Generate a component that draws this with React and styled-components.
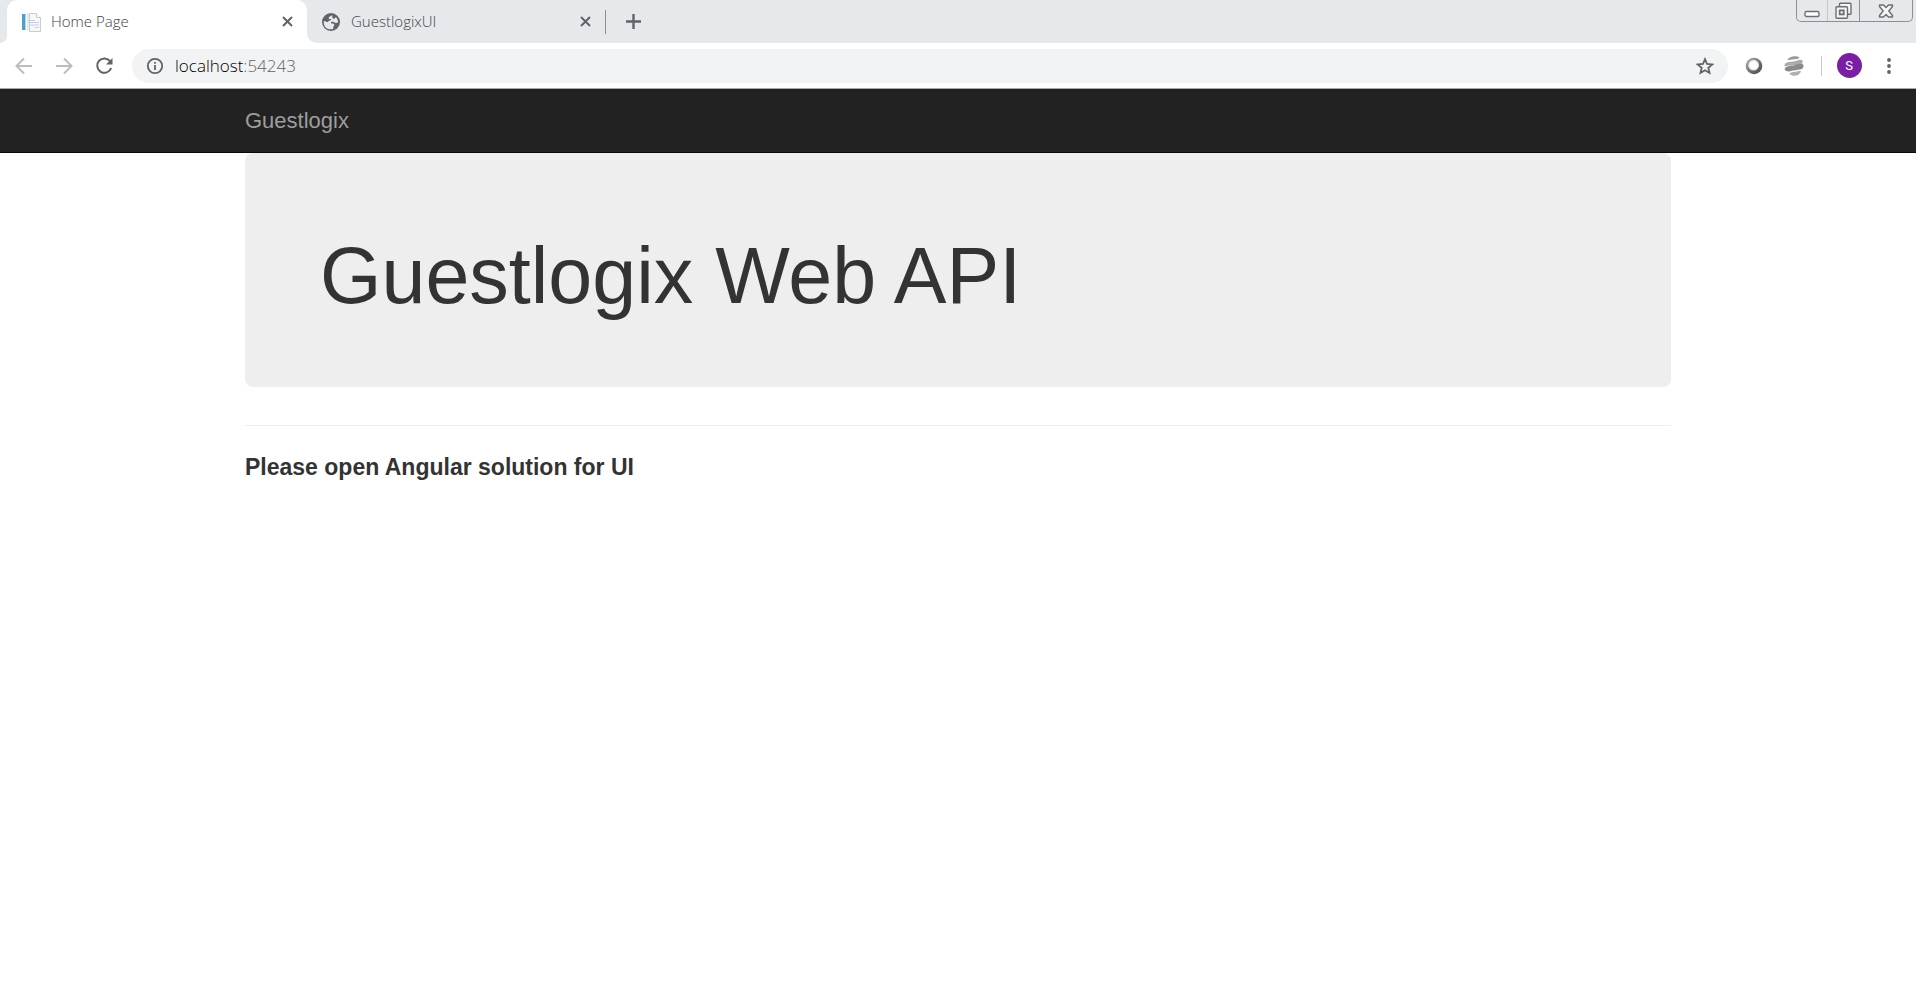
import React from "react";
import styled, { createGlobalStyle } from "styled-components";

const strip = "#e6e9ec";
const ink = "#5f6368";

const GlobalStyle = createGlobalStyle`
  *, *::before, *::after { box-sizing: border-box; }
  body {
    margin: 0;
    background: #fff;
    color: #333;
    font-family: "Liberation Sans", Arial, sans-serif;
  }
  button, input { font: inherit; color: inherit; border: 0; padding: 0; margin: 0; background: none; }
  svg { display: block; }
`;

/* Browser chrome */
const Chrome = styled.header`
  font-family: "Open Sans", "Segoe UI", sans-serif;
  color: ${ink};
  border-bottom: 1px solid #a9a9a9;
`;

const TabStrip = styled.div`
  display: flex;
  height: 43px;
  background: linear-gradient(${strip} 20px, #fff 20px);
`;

const StripEdge = styled.div`
  width: 7px;
  background: ${strip};
  border-bottom-right-radius: 7px;
`;

const StripRest = styled.div`
  flex: 1;
  display: flex;
  justify-content: space-between;
  background: ${strip};
  border-bottom-left-radius: 10px;
`;

const TabGroup = styled.div`
  display: flex;
  align-items: center;
`;

const Tab = styled.div`
  display: flex;
  align-items: center;
  width: ${(p) => (p.$active ? 300 : 298)}px;
  height: 43px;
  padding: 0 10px 0 14px;
  border-radius: 10px 10px 0 0;
  background: ${(p) => (p.$active ? "#fff" : "transparent")};
`;

const TabTitle = styled.button`
  display: flex;
  align-items: center;
  gap: 10px;
  flex: 1;
  height: 40px;
  color: #3f4246;
  font-size: 15px;
  font-weight: 300;
  line-height: 20px;
  text-align: left;
`;

const TabLabel = styled.span`
  padding-bottom: 2px;
`;

const IconButton = styled.button`
  display: flex;
  align-items: center;
  justify-content: center;
  flex: none;
  width: ${(p) => p.$w || 40}px;
  height: ${(p) => p.$h || 34}px;
`;

const Rule = styled.span`
  flex: none;
  width: 1px;
  height: ${(p) => p.$h}px;
  margin: 0 ${(p) => p.$gap || 0}px;
  background: ${(p) => p.$color};
`;

const WindowControls = styled.div`
  display: flex;
  height: 22px;
  margin-right: 3px;
  border: 1px solid #8c9094;
  border-top: 0;
  border-radius: 0 0 5px 5px;
`;

const WindowButton = styled.button`
  display: flex;
  align-items: center;
  justify-content: center;
  width: ${(p) => p.$w}px;
  border-right: ${(p) => (p.$line ? `1px solid ${p.$line}` : "0")};
`;

const Toolbar = styled.div`
  display: flex;
  align-items: center;
  height: 45px;
  padding: 0 7px 0 4px;
`;

const AddressBar = styled.div`
  flex: 1;
  display: flex;
  align-items: center;
  height: 34px;
  margin: 0 6px 0 8px;
  padding: 0 3px;
  border-radius: 17px;
  background: #f1f3f4;
`;

const AddressText = styled.label`
  flex: 1;
  display: flex;
  align-items: center;
  font-size: 17px;
  font-weight: 300;
  line-height: 24px;
`;

const AddressInput = styled.input`
  field-sizing: content;
  height: 24px;
  line-height: 24px;
  color: #000;
  outline: 0;
`;

const Port = styled.span`
  color: #5f6368;
`;

const Avatar = styled.span`
  display: flex;
  align-items: center;
  justify-content: center;
  width: 25px;
  height: 25px;
  border-radius: 50%;
  background: #7b1fa2;
  color: #fff;
  font-family: Roboto, sans-serif;
  font-size: 13px;
  line-height: 16px;
`;

/* Web page */
const NavBar = styled.nav`
  background: #222;
  border-bottom: 1px solid #080808;
`;

const Container = styled.div`
  max-width: 1464px;
  margin: 0 auto;
  padding: 0 19px;
`;

const NavRow = styled(Container)`
  display: flex;
  align-items: center;
  height: 63px;
`;

const Brand = styled.a`
  color: #9d9d9d;
  font-size: 22px;
  line-height: 26px;
  text-decoration: none;
`;

const Jumbotron = styled.section`
  padding: 79px 75px 68px;
  border-radius: 8px;
  background: #eee;
`;

const Title = styled.h1`
  margin: 0;
  font-size: 79px;
  font-weight: 400;
  line-height: 87px;
`;

const Divider = styled.hr`
  margin: 38px 0 28px;
  border: 0;
  border-top: 1px solid #eee;
`;

const Note = styled.h3`
  margin: 0;
  font-size: 23px;
  font-weight: 700;
  line-height: 26px;
`;

const PageIcon = () => (
  <svg width="20" height="20" viewBox="0 0 20 20" aria-hidden="true">
    <path d="M1 2h4v16H1z" fill="#4d9fd0" />
    <path d="M4 2h1v16H4z" fill="#a9d3ea" />
    <path d="M6.500 2h7v3h-4v13h-3z" fill="#eceff1" stroke="#d9dcde" strokeWidth=".6" />
    <path d="M8.500 1.500h7l4 4v14h-11z" fill="#f6f7f8" stroke="#c9ccd0" />
    <path d="M15.500 1.500v4h4" fill="#fff" stroke="#c9ccd0" />
    <path d="M7 8.500h7M7 10.500h11M9 13h9M14 15.500h4" stroke="#c7cfe0" />
  </svg>
);

const GlobeIcon = () => (
  <svg width="20" height="20" viewBox="0 0 20 20" aria-hidden="true">
    <circle cx="10" cy="10" r="9" fill={ink} />
    <path d="M11.500 3.200C9.700 3.400 7.500 5 7.600 6.300c.1 1 1.500.6 2.400.8.200 1-.8 1.600-2 1.700-.6 1.300-2 1.400-3.200.6L2.900 8.900c-.7 4 1.400 7 4.700 8.200 2 .5 3.600.2 4.600-.3.4-1-.4-1.600.3-2.400.8-.8 1.300-1.300.4-2.300-1-.8-2.300-.2-3-1-.4-.9.700-1.600 1.900-1.400 1.400.1 2 1.300 3.200 1.300.8 0 1.500-.5 2.100-.4.100-2-.9-4.300-2.400-5.500-.4 1.500-1.700 2.100-2.700 1.500-1-.8-.6-2.400-.5-3.400z" fill={strip} />
  </svg>
);

const CloseIcon = () => (
  <svg width="11" height="11" viewBox="0 0 11 11" aria-hidden="true">
    <path d="M1 1l9 9M10 1l-9 9" stroke={ink} strokeWidth="2" />
  </svg>
);

const ArrowIcon = ({ forward }) => (
  <svg width="18" height="18" viewBox="0 0 18 18" fill="none" stroke="#bbbdbf" strokeWidth="2" aria-hidden="true">
    <path d={forward ? "M1 9h15M9 1.500L16.500 9 9 16.500" : "M17 9H2M9 1.500L1.500 9 9 16.500"} />
  </svg>
);

const ReloadIcon = () => (
  <svg width="18" height="18" viewBox="0 0 18 18" aria-hidden="true">
    <path d="M15.200 4.300A7.200 7.200 0 1 0 16.200 11" fill="none" stroke={ink} strokeWidth="2" />
    <path d="M17.500 1v6.500h-6.500z" fill={ink} />
  </svg>
);

const InfoIcon = () => (
  <svg width="18" height="18" viewBox="0 0 18 18" aria-hidden="true">
    <circle cx="9" cy="9" r="7.200" fill="none" stroke={ink} strokeWidth="1.800" />
    <path d="M9 8v5M9 5v1.800" stroke={ink} strokeWidth="1.800" />
  </svg>
);

const StarIcon = () => (
  <svg width="18" height="18" viewBox="0 0 18 18" aria-hidden="true">
    <path d="M9 2.200l2 4.800 5.300.4-4 3.400 1.200 5.100L9 13.200l-4.500 2.700 1.200-5.100-4-3.400L7 7z" fill="none" stroke={ink} strokeWidth="1.800" />
  </svg>
);

const RingIcon = () => (
  <svg width="18" height="18" viewBox="0 0 18 18" aria-hidden="true">
    <defs>
      <linearGradient id="ring" x1="0" y1="0" x2="1" y2="1">
        <stop offset="0" stopColor="#b5b5b5" />
        <stop offset="0.500" stopColor="#777" />
        <stop offset="1" stopColor="#444" />
      </linearGradient>
      <radialGradient id="ringCore">
        <stop offset="0.600" stopColor="#fff" />
        <stop offset="1" stopColor="#ddd" />
      </radialGradient>
    </defs>
    <circle cx="9" cy="9" r="8.300" fill="url(#ring)" />
    <circle cx="8.600" cy="8.200" r="5.400" fill="url(#ringCore)" />
  </svg>
);

const StripesIcon = () => (
  <svg width="20" height="20" viewBox="0 0 20 20" aria-hidden="true">
    <path d="M3 4.200C5.500.2 12-1 15.500 1.800 15 3.600 6 3.500 3 4.200z" fill="#999" />
    <path d="M.5 10.500C0 5.500 5 6.200 9.500 5.500c4-.8 7.500-3 9-.6 1 2.600-2 3.800-6 4.300-5 .3-8.500 0-12 1.300z" fill="#aaa" />
    <path d="M.5 13.300c1-3.800 6-3.500 9.500-3.900 4-.8 9-3.200 9.500.4.300 3.800-4 4-8 4.500-4 .3-8.500 2.800-11-1z" fill="#8a8a8a" />
    <path d="M5.500 18c1-2.200 4-1.900 6-2.300 2-.5 5-1.300 5.500-.3C15.500 19.500 9.500 21.500 5.500 18z" fill="#b0b0b0" />
  </svg>
);

const DotsIcon = () => (
  <svg width="4" height="18" viewBox="0 0 4 18" fill={ink} aria-hidden="true">
    <circle cx="2" cy="3" r="1.900" />
    <circle cx="2" cy="9" r="1.900" />
    <circle cx="2" cy="15" r="1.900" />
  </svg>
);

const windowStroke = { fill: "none", stroke: "#6b6f73", strokeWidth: 1.4 };

const MinimizeIcon = () => (
  <svg width="16" height="18" viewBox="0 0 16 18" aria-hidden="true">
    <rect x="1" y="9.500" width="14" height="5" rx="1.500" {...windowStroke} fill="#fff" />
  </svg>
);

const RestoreIcon = () => (
  <svg width="18" height="18" viewBox="0 0 18 18" aria-hidden="true">
    <path d="M4.500 4V2q0-.8.800-.8h9.900q.8 0 .8.800v9.500q0 .8-.8.800H13" {...windowStroke} fill="#f4f5f6" />
    <rect x="1" y="4.700" width="11.500" height="11.500" rx="1" {...windowStroke} fill="#f4f5f6" />
    <rect x="4.700" y="8.400" width="4" height="4" {...windowStroke} strokeWidth="1.800" />
  </svg>
);

const WindowCloseIcon = () => (
  <svg width="16" height="14" viewBox="0 0 16 14" aria-hidden="true">
    <path d="M1.500 1h4L8 3.600 10.500 1h4v1.500L10.800 7l3.700 4.500V13h-4L8 10.400 5.500 13h-4v-1.500L5.200 7 1.500 2.500z" {...windowStroke} fill="#f4f5f6" strokeLinejoin="round" />
  </svg>
);

function BrowserTab({ title, icon, active }) {
  return (
    <Tab $active={active}>
      <TabTitle type="button">
        {icon}
        <TabLabel>{title}</TabLabel>
      </TabTitle>
      <IconButton type="button" $w={20} $h={20} aria-label={`Close ${title}`}>
        <CloseIcon />
      </IconButton>
    </Tab>
  );
}

export default function App() {
  return (
    <>
      <GlobalStyle />
      <Chrome>
        <TabStrip>
          <StripEdge />
          <BrowserTab title="Home Page" icon={<PageIcon />} active />
          <StripRest>
            <TabGroup>
              <BrowserTab title="GuestlogixUI" icon={<GlobeIcon />} />
              <Rule $h={24} $color="#8b8f93" />
              <IconButton type="button" $w={54} aria-label="New tab">
                <svg width="15" height="15" viewBox="0 0 15 15" aria-hidden="true">
                  <path d="M7.500 0v15M0 7.500h15" stroke={ink} strokeWidth="2.400" />
                </svg>
              </IconButton>
            </TabGroup>
            <WindowControls>
              <WindowButton type="button" $w={31} $line="#c5c8cb" aria-label="Minimize">
                <MinimizeIcon />
              </WindowButton>
              <WindowButton type="button" $w={32} $line="#8c9094" aria-label="Restore">
                <RestoreIcon />
              </WindowButton>
              <WindowButton type="button" $w={52} aria-label="Close window">
                <WindowCloseIcon />
              </WindowButton>
            </WindowControls>
          </StripRest>
        </TabStrip>
        <Toolbar>
          <IconButton type="button" aria-label="Back">
            <ArrowIcon />
          </IconButton>
          <IconButton type="button" aria-label="Forward">
            <ArrowIcon forward />
          </IconButton>
          <IconButton type="button" aria-label="Reload">
            <ReloadIcon />
          </IconButton>
          <AddressBar>
            <IconButton type="button" aria-label="Site information">
              <InfoIcon />
            </IconButton>
            <AddressText>
              <AddressInput type="text" aria-label="Address" defaultValue="localhost" spellCheck={false} />
              <Port>:54243</Port>
            </AddressText>
            <IconButton type="button" aria-label="Bookmark this page">
              <StarIcon />
            </IconButton>
          </AddressBar>
          <IconButton type="button" aria-label="Ring extension">
            <RingIcon />
          </IconButton>
          <IconButton type="button" aria-label="Stripes extension">
            <StripesIcon />
          </IconButton>
          <Rule $h={20} $gap={7} $color="#c8cacc" />
          <IconButton type="button" aria-label="Profile">
            <Avatar>S</Avatar>
          </IconButton>
          <IconButton type="button" aria-label="Menu">
            <DotsIcon />
          </IconButton>
        </Toolbar>
      </Chrome>
      <NavBar>
        <NavRow>
          <Brand href="/">Guestlogix</Brand>
        </NavRow>
      </NavBar>
      <Container as="main">
        <Jumbotron>
          <Title>Guestlogix Web API</Title>
        </Jumbotron>
        <Divider />
        <Note>Please open Angular solution for UI</Note>
      </Container>
    </>
  );
}
